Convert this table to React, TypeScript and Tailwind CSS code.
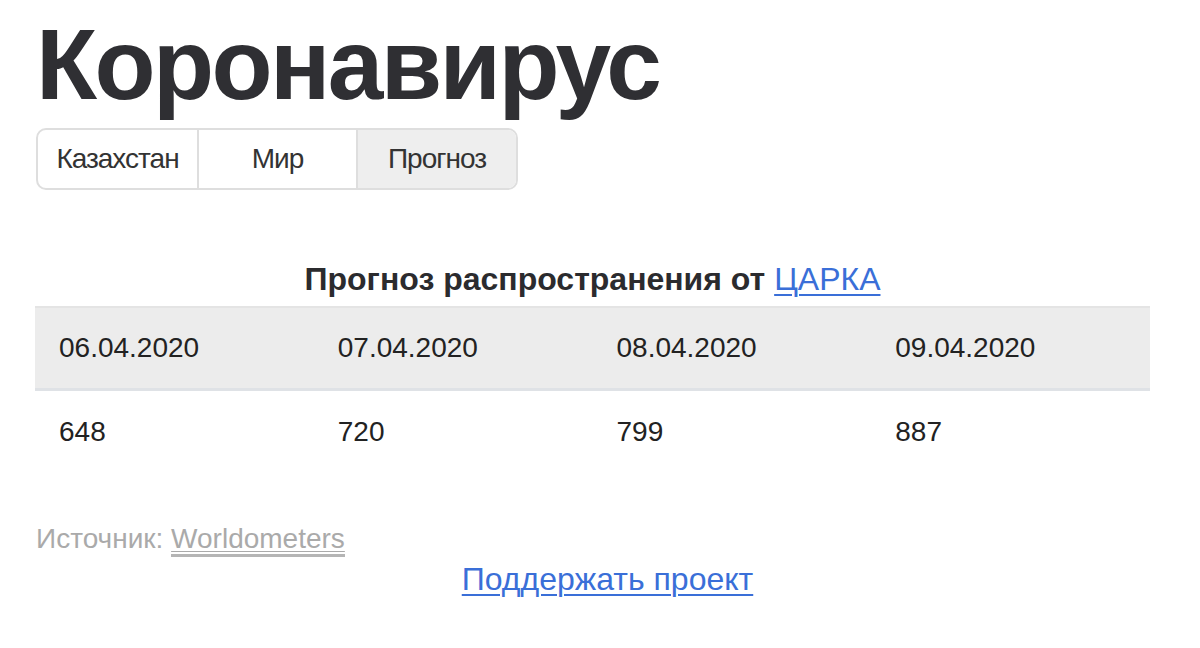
import React from "react";

const dates = ["06.04.2020", "07.04.2020", "08.04.2020", "09.04.2020"];
const values = ["648", "720", "799", "887"];

export default function App() {
  return (
    <div
      className="min-h-[648px] bg-white text-[#2b2b2e]"
      style={{ fontFamily: '"Liberation Sans", Arial, Helvetica, sans-serif' }}
    >
      <div className="w-[1115px] ml-[35px]">
        <h1 className="pt-[14px] text-[100px] font-bold leading-[100px] tracking-[-2.6px] text-[#2f2f33] ml-[1px]">
          Коронавирус
        </h1>
        <div className="mt-[14px] ml-[1px] flex h-[62px] w-[482px] overflow-hidden rounded-[10px] border-2 border-[#dedede] text-[28px] tracking-[-1px] text-[#333]">
          <div className="flex w-[161px] items-center justify-center border-r-2 border-[#dedede]">Казахстан</div>
          <div className="flex w-[159px] items-center justify-center border-r-2 border-[#dedede]">Мир</div>
          <div className="flex flex-1 items-center justify-center bg-[#eeeeee]">Прогноз</div>
        </div>
        <div className="mt-[70px] h-[38px] text-center text-[32px] font-bold leading-[38px] text-[#2b2b2e]">
          Прогноз распространения от{" "}
          <a href="#" className="font-normal text-[#3a6fd8] underline decoration-2 underline-offset-4">
            ЦАРКА
          </a>
        </div>
        <table className="mt-[8px] w-full table-fixed border-collapse text-[28px] leading-[32px] text-[#222]">
          <thead>
            <tr className="border-t-2 border-b-[3px] border-t-[#e4e4e4] border-b-[#dfe2e6] bg-[#ececec]">
              {dates.map((d) => (
                <th key={d} className="p-[24px] text-left font-normal">
                  {d}
                </th>
              ))}
            </tr>
          </thead>
          <tbody>
            <tr>
              {values.map((v) => (
                <td key={v} className="px-[24px] pt-[25px] pb-[24px]">
                  {v}
                </td>
              ))}
            </tr>
          </tbody>
        </table>
        <div className="mt-[51px] ml-[1px] text-[28px] leading-[32px] text-[#aaaaaa]">
          Источник:{" "}
          <a href="#" className="border-b-[3px] border-[#b5b5b5] text-[#aaaaaa] underline decoration-1 underline-offset-[3px]">
            Worldometers
          </a>
        </div>
        <div className="mt-[6px] pl-[30px] text-center text-[32px] leading-[36px]">
          <a href="#" className="text-[#3a6fd8] underline decoration-2 underline-offset-4">
            Поддержать проект
          </a>
        </div>
      </div>
    </div>
  );
}
